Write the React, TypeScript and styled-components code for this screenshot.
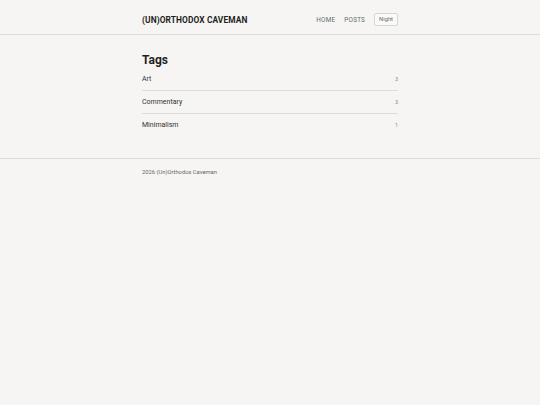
import styled, { createGlobalStyle } from 'styled-components';

const GlobalStyle = createGlobalStyle`
	html, body {
		margin: 0;
		padding: 0;
		background: #f6f5f3;
		font-family: Roboto, "Liberation Sans", sans-serif;
		color: #222;
	}
`

const tags = [
	{ name: 'Art', count: 3 },
	{ name: 'Commentary', count: 3 },
	{ name: 'Minimalism', count: 1 },
]

export default function App() {
	return (
		<>
			<GlobalStyle />
			<Header>
				<Inner>
					<Brand>(UN)ORTHODOX CAVEMAN</Brand>
					<Nav>
						<NavLink>HOME</NavLink>
						<NavLink>POSTS</NavLink>
						<ThemeButton>Night</ThemeButton>
					</Nav>
				</Inner>
			</Header>
			<Main>
				<Title>Tags</Title>
				<TagList>
					{tags.map((tag) => (
						<TagRow key={tag.name}>
							<span>{tag.name}</span>
							<Count>{tag.count}</Count>
						</TagRow>
					))}
				</TagList>
			</Main>
			<Footer>
				<FooterInner>2026 (Un)Orthodox Caveman</FooterInner>
			</Footer>
		</>
	)
}

const Header = styled.header`
	height: 34px;
	border-bottom: 1px solid #dddcda;
`

const Inner = styled.div`
	width: 256px;
	height: 100%;
	margin: 0 auto;
	display: flex;
	align-items: center;
	justify-content: space-between;
	padding-top: 5px;
	box-sizing: border-box;
`

const Brand = styled.div`
	font-size: 8.4px;
	font-weight: 700;
	letter-spacing: 0.1px;
	color: #1f1f1f;
`

const Nav = styled.nav`
	display: flex;
	align-items: center;
	gap: 9px;
`

const NavLink = styled.span`
	font-size: 6.4px;
	font-weight: 400;
	color: #6a6a6a;
	letter-spacing: 0.2px;
`

const ThemeButton = styled.button`
	font-family: inherit;
	font-size: 5.8px;
	color: #6a6a6a;
	background: #fafaf9;
	border: 1px solid #d6d5d3;
	border-radius: 2px;
	padding: 2px 4px;
	line-height: 1.3;
`

const Main = styled.main`
	width: 256px;
	margin: 0 auto;
	padding: 18px 0 22px;
`

const Title = styled.h1`
	margin: 0;
	font-size: 12px;
	line-height: 15px;
	font-weight: 700;
	color: #1f1f1f;
`

const TagList = styled.div`
	display: flex;
	flex-direction: column;
`

const TagRow = styled.div`
	display: flex;
	justify-content: space-between;
	align-items: center;
	height: 22px;
	font-size: 7px;
	color: #333;
	border-bottom: 1px solid #dddcda;

	&:last-child {
		border-bottom: none;
	}
`

const Count = styled.span`
	font-size: 5.5px;
	color: #888;
`

const Footer = styled.footer`
	border-top: 1px solid #dddcda;
	padding: 10px 0;
`

const FooterInner = styled.div`
	width: 256px;
	margin: 0 auto;
	font-size: 5.8px;
	color: #666;
`
